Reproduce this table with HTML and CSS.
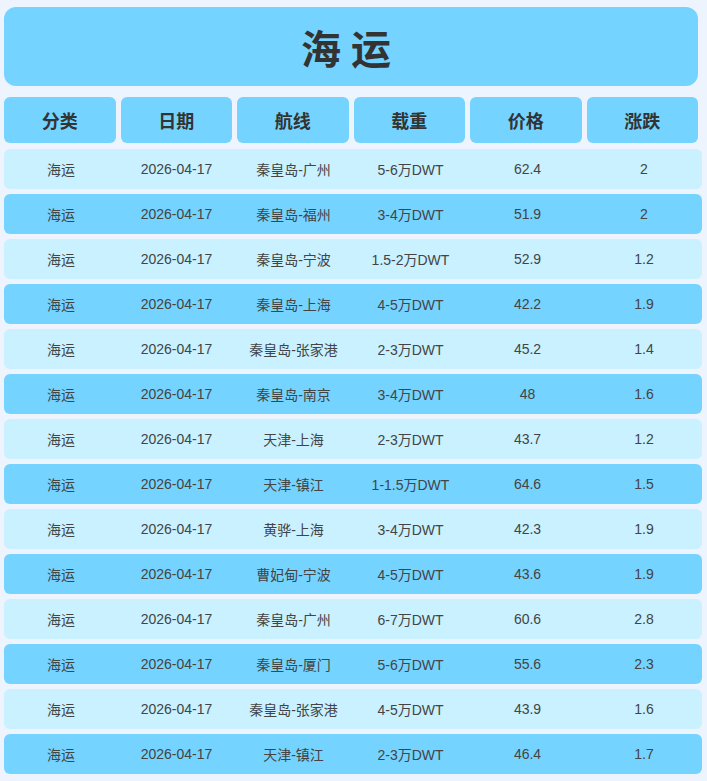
FILE: index.html
```html
<!DOCTYPE html>
<html lang="zh">
<head>
<meta charset="utf-8">
<title>海运</title>
<link rel="stylesheet" href="styles.css">
</head>
<body>
<div class="page">
  <div class="title">海运</div>
  <div class="head">
    <div class="hcell">分类</div>
    <div class="hcell">日期</div>
    <div class="hcell">航线</div>
    <div class="hcell">载重</div>
    <div class="hcell">价格</div>
    <div class="hcell">涨跌</div>
  </div>
  <div class="rows">
    <div class="row light"><span>海运</span><span>2026-04-17</span><span>秦皇岛-广州</span><span>5-6万DWT</span><span>62.4</span><span>2</span></div>
    <div class="row dark"><span>海运</span><span>2026-04-17</span><span>秦皇岛-福州</span><span>3-4万DWT</span><span>51.9</span><span>2</span></div>
    <div class="row light"><span>海运</span><span>2026-04-17</span><span>秦皇岛-宁波</span><span>1.5-2万DWT</span><span>52.9</span><span>1.2</span></div>
    <div class="row dark"><span>海运</span><span>2026-04-17</span><span>秦皇岛-上海</span><span>4-5万DWT</span><span>42.2</span><span>1.9</span></div>
    <div class="row light"><span>海运</span><span>2026-04-17</span><span>秦皇岛-张家港</span><span>2-3万DWT</span><span>45.2</span><span>1.4</span></div>
    <div class="row dark"><span>海运</span><span>2026-04-17</span><span>秦皇岛-南京</span><span>3-4万DWT</span><span>48</span><span>1.6</span></div>
    <div class="row light"><span>海运</span><span>2026-04-17</span><span>天津-上海</span><span>2-3万DWT</span><span>43.7</span><span>1.2</span></div>
    <div class="row dark"><span>海运</span><span>2026-04-17</span><span>天津-镇江</span><span>1-1.5万DWT</span><span>64.6</span><span>1.5</span></div>
    <div class="row light"><span>海运</span><span>2026-04-17</span><span>黄骅-上海</span><span>3-4万DWT</span><span>42.3</span><span>1.9</span></div>
    <div class="row dark"><span>海运</span><span>2026-04-17</span><span>曹妃甸-宁波</span><span>4-5万DWT</span><span>43.6</span><span>1.9</span></div>
    <div class="row light"><span>海运</span><span>2026-04-17</span><span>秦皇岛-广州</span><span>6-7万DWT</span><span>60.6</span><span>2.8</span></div>
    <div class="row dark"><span>海运</span><span>2026-04-17</span><span>秦皇岛-厦门</span><span>5-6万DWT</span><span>55.6</span><span>2.3</span></div>
    <div class="row light"><span>海运</span><span>2026-04-17</span><span>秦皇岛-张家港</span><span>4-5万DWT</span><span>43.9</span><span>1.6</span></div>
    <div class="row dark"><span>海运</span><span>2026-04-17</span><span>天津-镇江</span><span>2-3万DWT</span><span>46.4</span><span>1.7</span></div>
  </div>
</div>
</body>
</html>
```

FILE: styles.css
```css
html, body {
  margin: 0;
  padding: 0;
  background: #eef4fe;
}
body {
  font-family: "Liberation Sans", "Noto Sans CJK SC", sans-serif;
  color: #333;
}
.page {
  padding: 7px 0 0 4px;
  width: 698px;
}
.title {
  width: 694px;
  height: 79px;
  background: #75d3ff;
  border-radius: 12px;
  display: flex;
  align-items: center;
  justify-content: center;
  font-family: "Noto Sans CJK SC", sans-serif;
  font-size: 40px;
  font-weight: 700;
  letter-spacing: 10px;
  color: #333;
}
.head {
  margin-top: 11px;
  width: 694px;
  display: grid;
  grid-template-columns: repeat(6, 1fr);
  gap: 5px;
}
.hcell {
  height: 46px;
  background: #75d3ff;
  border-radius: 6px;
  display: flex;
  align-items: center;
  justify-content: center;
  font-family: "Noto Sans CJK SC", sans-serif;
  font-size: 18px;
  font-weight: 700;
  color: #333;
}
.rows {
  margin-top: 6px;
  display: flex;
  flex-direction: column;
  gap: 5px;
}
.row {
  height: 40px;
  border-radius: 6px;
  display: grid;
  grid-template-columns: 114px repeat(4, 117px) 116px;
  align-items: center;
  font-size: 14px;
  color: #444;
}
.row span {
  text-align: center;
}
.light { background: #c9f1ff; }
.dark { background: #75d3ff; }
```
